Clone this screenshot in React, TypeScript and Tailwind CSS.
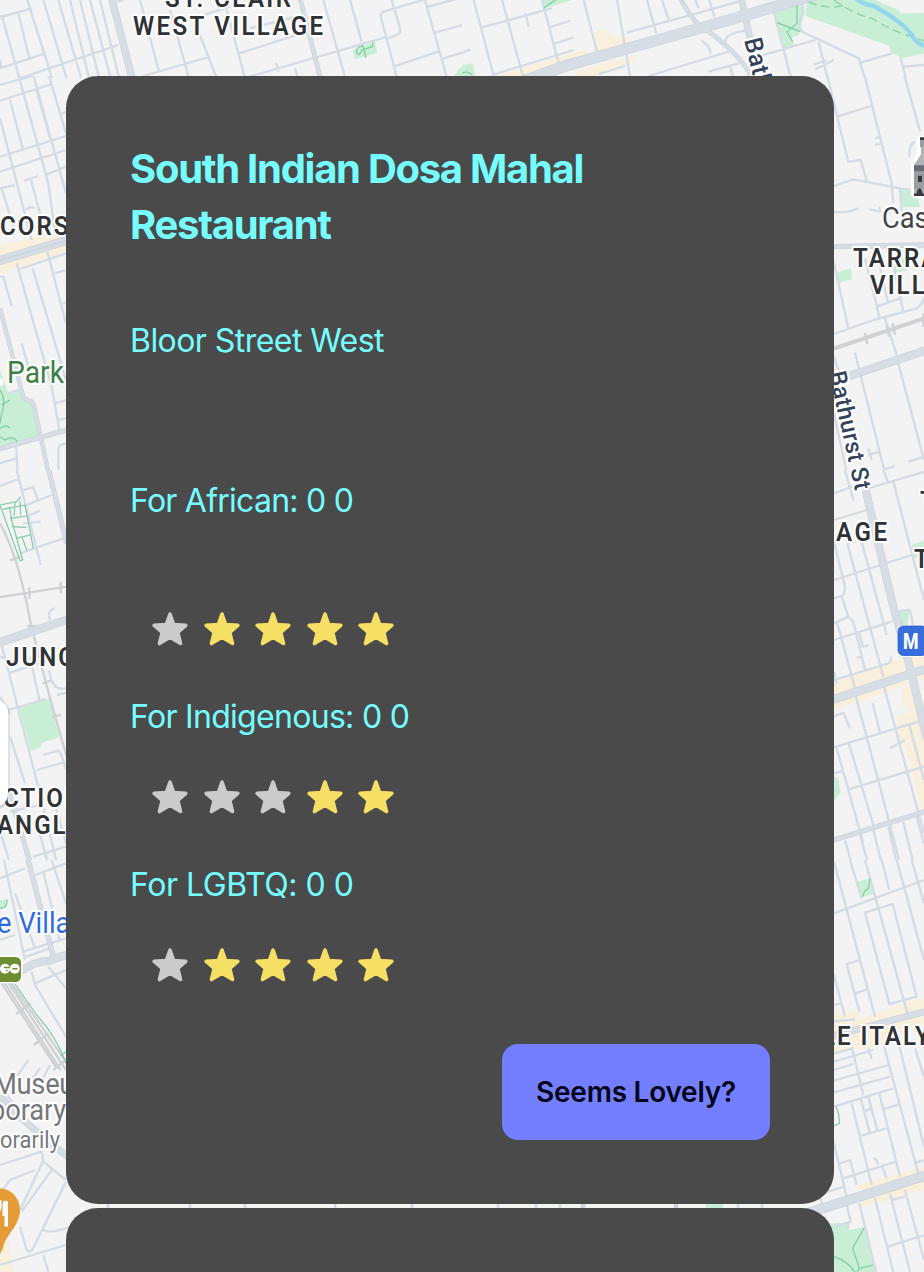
import React from "react";

type RegionProps = {
  x: number;
  y: number;
  w: number;
  h: number;
  box: string;
  parks?: string;
  commercial?: string;
  minor: string;
  major?: { d: string; w: number }[];
  rail?: string;
  trails?: string;
  children?: React.ReactNode;
};

function Region({ x, y, w, h, box, parks, commercial, minor, major = [], rail, trails, children }: RegionProps) {
  return (
    <svg x={x} y={y} width={w} height={h} viewBox={box} fill="none" strokeLinejoin="round">
      {commercial && <path d={commercial} fill="#f8f0dc" />}
      {parks && <path d={parks} fill="#c8efd5" />}
      <path d={minor} stroke="#d3dbe4" strokeWidth={7} />
      {rail && <path d={rail} stroke="#d0d1d3" strokeWidth={7} />}
      {major.map((m) => (
        <path key={m.d} d={m.d} stroke="#c5ced6" strokeWidth={m.w + 2} />
      ))}
      {major.map((m) => (
        <path key={m.d} d={m.d} stroke="#d7dde5" strokeWidth={m.w - 1} />
      ))}
      {trails && <path d={trails} stroke="#7fc9a4" strokeWidth={3.5} />}
      {children}
    </svg>
  );
}

type LabelProps = {
  x: number;
  y: number;
  text: string;
  size?: number;
  length?: number;
  color?: string;
  weight?: number;
  spacing?: number;
  rotate?: number;
  squeeze?: number;
};

function Label({
  x,
  y,
  text,
  size = 26.5,
  length,
  color = "#303236",
  weight = 600,
  spacing = 2.2,
  rotate = 0,
  squeeze = 0.91,
}: LabelProps) {
  return (
    <text
      fontSize={size}
      fontWeight={weight}
      fill={color}
      stroke="#ffffff"
      strokeWidth={4}
      strokeLinejoin="round"
      paintOrder="stroke"
      letterSpacing={spacing}
      textLength={length ? length / squeeze : undefined}
      transform={`translate(${x} ${y}) rotate(${rotate}) scale(${squeeze} 1)`}
    >
      {text}
    </text>
  );
}

function CityMap() {
  return (
    <svg
      className="absolute inset-0 font-['Roboto',sans-serif]"
      width="924"
      height="1272"
      viewBox="0 0 924 1272"
      aria-hidden="true"
    >
      <rect width="924" height="1272" fill="#f4f3f4" />
      <Region
        x={0} y={0} w={462} h={78} box="0 0 1386 234"
        parks="M1058 150L1125 125L1132 158L1065 178ZM1375 207L1386 200V234H1360Z"
        minor="M5 45L68 270M55 40L88 175M82 0L150 215L165 270M130 0L210 270M175 0L245 240M210 0L267 234M240 0L297 234M270 0L332 234M300 0L357 234M0 52L95 25M0 205L130 162M0 255L355 135M70 270L150 250M350 5L370 0M0 180L5 205M420 0L477 215M510 30L567 234M590 80L650 234M680 30L735 234M430 228L630 170M718 160L905 100M610 45L690 20M750 85L910 45M735 234L1155 112M828 188L836 215M885 205L894 234M970 0L1036 234M1050 0L1085 125M1270 0L1150 35Q1138 42 1145 60L1191 234M1175 0L1200 85Q1205 100 1190 105L1160 117M1275 0L1341 234M1285 20L1386 -8M1305 98L1386 75M1180 200L1315 155M1330 175L1386 158"
        major={[{ d: "M335 -5L396 234", w: 20 }, { d: "M900 -5L961 234", w: 12 }]}
        trails="M1090 138Q1065 140 1070 160Q1078 170 1085 150L1118 140V127M1088 135L1098 174"
      />
      <Region
        x={462} y={0} w={462} h={78} box="0 0 1386 234"
        commercial="M395 95Q430 80 460 110L495 105L500 130L405 155ZM80 234L375 147V170L220 234ZM340 215L520 165V185L370 234H340Z"
        parks="M240 0H330L247 25ZM0 195L32 190L40 234H0ZM935 40L1020 10L1025 45L1010 105L990 112L997 140L968 148ZM1035 0H1240L1310 30L1315 40L1386 38V160L1320 175L1285 155L1283 138L1030 48Z"
        minor="M35 0L95 228M120 0L182 225M240 0L290 190M365 0L405 155M465 0L505 234M555 0L583 100M600 0L620 58M700 0L710 25M742 0L757 50M60 82L270 25M190 40L200 80M262 82L325 62M275 132L335 112M90 225L335 150M495 98L830 5M410 222L490 198M560 228L800 155M740 215L830 190M885 170L1060 120M805 200L812 228M0 158L25 148M718 122Q748 140 745 162M850 92Q790 100 790 125M1020 0L1025 35Q1005 75 1020 95L1190 175L1220 270M1070 125L1105 270M935 35L987 234M1195 188L1290 160M1315 170L1340 270M1325 200L1386 195M1055 193L1095 180M1060 208L1115 180"
        major={[
          { d: "M655 -5Q700 80 740 95Q830 160 872 234", w: 12 },
          { d: "M838 -5L882 200", w: 18 },
          { d: "M180 245L310 198L560 128L860 43L1070 -18", w: 32 },
        ]}
        trails="M245 25L280 0M1005 15V70L975 95L992 125M945 68L1015 95M0 220Q18 210 30 225"
      >
        <path d="M1040 5Q1080 28 1150 17M1115 0Q1180 45 1230 55Q1290 95 1386 122" stroke="#8fcfaa" strokeWidth={4} strokeDasharray="26 14" />
        <path d="M1180 -5Q1205 14 1235 18Q1330 70 1352 110Q1365 132 1390 138" stroke="#93d7ec" strokeWidth={13} />
      </Region>

      <Region
        x={0} y={76} w={100} h={394} box="0 48 300 1182"
        commercial="M0 555L240 500V560L0 642Z"
        parks="M0 930L25 1000L58 990L70 1020L100 1030L120 1125L0 1160Z"
        minor="M0 175L95 540M30 120L68 265M40 -10L145 370L165 520M110 90L150 235M85 -10L198 400M130 -10L198 220M0 75L240 8M0 122L155 72M0 290L198 228M0 335L198 270M0 385L45 375M72 362L115 348M135 345L198 320M180 162L240 143M78 450Q90 435 105 445M5 385L40 500M93 360L125 480M178 330L198 400M50 610L155 980L178 1110M98 625L198 960M142 575L198 790M0 650H10L35 738M65 850L85 920M60 627L198 580M165 640L198 630M188 730L198 727M165 1030L198 1020M175 1080L198 1075M25 1000L55 990M175 1260V1165Q175 1155 198 1150M48 1155L55 1260M0 1210L50 1195"
        major={[
          { d: "M0 745L67 1000Q72 1022 90 1022Q102 1025 105 1050L150 1260", w: 11 },
          { d: "M-5 1167L200 1110", w: 13 },
          { d: "M-5 603L250 526", w: 25 },
        ]}
        trails="M0 990Q20 1020 5 1060L0 1090M5 1035L30 1020M0 1105Q20 1090 30 1105M0 1130L15 1140Q40 1125 52 1145"
      >
        <path d="M-5 603L200 541" stroke="#c5ced6" strokeWidth={3} />
        <circle cx="-2" cy="967" r="12" fill="#fff" />
      </Region>

      <Region
        x={0} y={470} w={80} h={390} box="0 0 240 1170"
        parks="M58 715L148 685L178 802L122 820L125 830L92 842Z"
        minor="M50 0L122 285M0 48L60 25M80 105L155 75M70 60L100 52Q108 75 115 92M85 138L120 122M70 160L122 155M60 250L190 205M150 450Q140 420 165 415M5 525L130 1010L175 1200M0 560L15 565M30 608L150 570M90 560L118 690M25 720L135 688M148 600Q155 665 198 655M170 675L198 668M110 900L190 878M130 855L175 842Q185 850 198 900M30 800L75 940M0 1080L35 1200M30 1025L120 1005M165 1005L198 1120M110 1060L150 1200M0 680L30 730M100 1160L198 1130"
        rail="M0 160Q55 260 90 450Q130 620 200 860M-5 382L200 350M88 352V387M182 335V370M30 272L60 260M82 468H110M128 640L153 632M155 742L183 734"
        major={[
          { d: "M145 -5L200 220", w: 13 },
          { d: "M-5 518L200 450", w: 24 },
          { d: "M25 960L97 1200", w: 13 },
        ]}
        trails="M0 105L50 95L62 80M0 105L60 272L68 270L35 150L28 110M8 118L75 105L100 235M30 145L80 138M35 170L80 172M48 205L90 195M45 98L42 138M60 92L62 135M66 200L80 240"
      />
      <Region
        x={0} y={860} w={100} h={412} box="0 0 300 1236"
        commercial="M0 1130L25 1140L45 1236H0Z"
        parks="M0 120L22 118L20 138L0 148Z"
        minor="M12 0L75 300M0 55L75 25M130 35L180 245M155 0L198 130M105 45L198 10M45 100L105 265M0 240L45 225M70 275L198 235M78 290L150 265M95 335L105 375L198 530M105 370L198 330M145 320L198 385M0 915L125 875L130 905L198 960M128 905L60 1050M155 930L65 1055M105 930L30 960L0 1000M60 1100L80 1170Q88 1180 98 1168L198 965M130 1110Q150 1125 240 1090M0 1215L280 1130M85 600L50 650M120 625L80 680M150 615L110 690M0 680L40 730M198 940L300 1000M130 1185L145 1236"
        rail="M5 370L170 625M15 370L182 630M27 370L198 630M35 370L205 615M48 462L92 430M102 555L145 520M160 630L198 600"
        major={[
          { d: "M83 -5L160 290", w: 14 },
          { d: "M60 335Q110 300 150 302Q170 292 200 285", w: 22 },
          { d: "M0 708Q60 780 210 895", w: 18 },
        ]}
        trails="M45 372L110 465Q170 530 198 610M182 588L198 575M0 145Q25 145 20 118"
      />

      <Region
        x={802} y={76} w={122} h={394} box="-54 48 366 1182"
        parks="M238 390L290 395L300 440L250 442ZM48 638L92 625L97 658L55 668ZM222 600L255 595L262 632L225 638Z"
        minor="M10 0L85 305L122 300L140 362M122 0L215 370L220 430M240 0L300 215M50 170L155 138M245 20L312 15M165 235L180 231M165 255L183 251M42 378L100 358L240 385L312 395M40 455Q70 462 115 445M148 448L180 455L178 440M42 610L85 805M135 595L178 770M175 595L203 725M215 595L250 755M170 740L240 715M42 822L160 780L290 745Q305 735 312 715M240 385L245 455M195 775L230 885M235 910L312 1200M105 878L200 1260M42 890L55 930M42 1060L85 1260M145 1185L178 1175M145 1165L155 1200M195 1228L225 1218M265 1205L312 1190M240 1260L312 1235M285 245Q265 255 268 290"
        rail="M42 868L312 778M42 863L312 773M135 818L142 852M200 795L207 830M218 790L225 824M310 760V800"
        major={[{ d: "M40 560L314 555", w: 14 }, { d: "M75 952L314 872", w: 23 }]}
      >
        <path d="M286 402V316L303 285V240H330V402Z" stroke="#fff" strokeWidth="26" fill="#fff" />
        <path d="M282 315L303 283V235H312V408H282Z" fill="#b0b2b8" />
        <path d="M300 235H312V262H300ZM282 334H312V388H282Z" fill="#9b9da5" />
        <path d="M282 316H312V334H282ZM282 400H312V408H282Z" fill="#686b73" />
        <path d="M294 347H306V366H294ZM290 408V396Q299 373 307 396V408ZM300 232H312V240H300ZM282 402H312V408H282Z" fill="#37393f" />
      </Region>
      <Region
        x={820} y={470} w={104} h={390} box="0 0 312 1170"
        commercial="M42 635L230 570L312 550V625L42 722ZM250 655L300 640L312 700V1020L300 1010L270 870L235 790L230 740L272 725L245 690Z"
        parks="M42 920L55 925L62 970L42 992ZM238 425L268 422L262 470H245ZM275 225L312 210V240L285 265Z"
        minor="M42 70L110 45M130 60L312 5M42 150L140 120M42 330L275 255M42 510L215 455M75 0L100 90M190 0L205 40M220 35L312 390M82 220L190 620M125 215L200 495M42 215L75 350Q75 375 65 378L42 385M65 378L85 440L100 455L135 600M42 460L85 440M52 460L105 655M42 630L205 580Q215 575 213 560M42 605L50 640M118 490L128 530L145 527M110 562H125M105 670L185 970L245 1200M192 650L312 1090M42 740L70 728L90 775M158 698L180 790M42 832L295 755M50 835L130 1120M85 815L160 1065M210 835L255 810M85 958L312 890M268 765L312 930M42 910L68 902M75 1110L100 1200M120 1095L150 1200M160 1080L190 1200M205 1070L235 1200M250 1055L285 1200M290 1040L312 1120M230 440Q230 418 270 420L280 470"
        major={[
          { d: "M42 1110L314 1025", w: 13 },
          { d: "M137 60L215 390L272 600L320 805", w: 22 },
          { d: "M40 688L314 598", w: 24 },
        ]}
      />
      <Region
        x={802} y={860} w={122} h={412} box="-54 0 366 1236"
        commercial="M42 465L110 450L122 475L312 412V492L170 560L42 578ZM115 975L312 920V990L125 1040Z"
        parks="M112 65L150 55L160 102L125 112ZM-54 1095L80 1088L88 1110L132 1100L165 1236H-54Z"
        minor="M42 5L165 470M90 0L125 115M135 0L265 470M185 0L208 90M230 0L312 300M275 0L312 130M42 160L312 60M135 158L218 132L290 410L208 432ZM42 345L75 470M118 300L80 312L118 455M105 400L145 387M42 435L60 430M42 484L105 478M42 580L100 565M42 605L160 570M42 630L100 612M42 662L205 615M42 697L210 650M42 740L220 685M95 560L130 705M145 565L155 597M190 550L300 960M235 545L312 860M285 565L312 650M95 730L155 975M122 715L150 820M145 710L172 812M132 755L155 745M178 700L240 950M120 828L200 805M190 748L235 733M60 910L90 900L110 975M160 895Q172 895 173 915M70 955L228 905M187 920L200 955M285 908L312 900M42 850L80 1010M0 1003L70 980M0 1010L8 1035M80 1035L92 1085L42 1100M85 1085V1105M118 1030L168 1236M165 1015L220 1236M210 1000L270 1236M255 990L312 1200M215 1020L255 1010M205 1160L312 1125"
        major={[{ d: "M40 527L314 455", w: 18 }, { d: "M-54 1065L314 947", w: 28 }]}
        trails="M130 110Q128 95 145 85L150 55M48 740Q60 765 58 790L42 798M132 1105L98 1165L118 1225L160 1215M42 1190Q85 1205 105 1236M118 1225L112 1236"
      />

      <g>
        <rect x="96" y="1202" width="708" height="8" fill="#f4f6f2" />
        <path d="M706 1202H723V1210H706Z" fill="#c8efd5" />
        <path d="M108 1202V1210M190 1202V1210M245 1202V1210M335 1202V1210M412 1202V1210M498 1202V1210M536 1202V1210M560 1202V1210M738 1202V1210M762 1202V1210" stroke="#d3dbe4" strokeWidth="2.5" />
        <path d="M583 1202V1210M676 1202V1210" stroke="#cbd3dc" strokeWidth="4.5" />
      </g>

      <Label x={165} y={7} text="ST. CLAIR" length={128} />
      <Label x={133} y={34.5} text="WEST VILLAGE" length={192} />
      <Label x={0} y={235} text="CORSO" />
      <Label x={7} y={383} text="Park" size={31} weight={400} color="#3d8045" spacing={0} length={57} />
      <Label x={6} y={666} text="JUNCTION" />
      <Label x={3} y={807} text="CTION" />
      <Label x={-3} y={834} text="ANGLE" />
      <Label x={-3} y={933} text="e Village" size={30} weight={400} color="#2f6be0" spacing={0} />
      <Label x={-7} y={1094} text="Museum" size={30} weight={400} color="#74787d" spacing={-0.3} />
      <Label x={-10} y={1120} text="porary" size={30} weight={400} color="#74787d" spacing={-0.3} length={76} />
      <Label x={0} y={1148} text="orarily" size={24} weight={400} color="#74787d" spacing={0} length={60} />
      <Label x={882} y={228} text="Casa" size={30} weight={400} color="#424548" spacing={0} />
      <Label x={853} y={267} text="TARRAGON" />
      <Label x={870} y={294} text="VILLAGE" />
      <Label x={836} y={541} text="AGE" length={53} />
      <Label x={920} y={510} text="T" />
      <Label x={914} y={568} text="THE" />
      <Label x={822} y={1045} text="LE ITALY" />
      <Label x={744} y={40} text="Bathurst" size={25} weight={500} color="#35425a" spacing={0.4} rotate={76} squeeze={0.97} />
      <Label x={829} y={373} text="Bathurst St" size={24} weight={500} color="#35425a" spacing={0} length={121} rotate={77.5} squeeze={0.97} />

      <g>
        <rect x="-30" y="702" width="38" height="108" rx="13" fill="#8a8d92" opacity="0.18" />
        <rect x="-30" y="700" width="40" height="108" rx="13" fill="#8a8d92" opacity="0.18" />
        <rect x="-30" y="700" width="38" height="106" rx="12" fill="#ffffff" />
      </g>
      <g>
        <rect x="-8" y="955.5" width="30.5" height="27.5" rx="7" fill="#ffffff" />
        <rect x="-8" y="957" width="29" height="25" rx="5.5" fill="#6c8d30" />
        <circle cx="5" cy="968.8" r="5" fill="#fff" />
        <circle cx="14.8" cy="968.8" r="5" fill="#fff" />
        <path d="M4 967.5H10M12.300 968.800H17.500M6 970.5H7.500" stroke="#6c8d30" strokeWidth="1.500" />
      </g>
      <g>
        <path d="M0 1188.500C11 1188.500 20 1198 20 1210C20 1226 5 1235 3 1248L-1 1256Z" fill="#e59b36" />
        <path d="M3.500 1201Q8 1200 8 1202V1226.500H4.500V1216H2.500V1204ZM-3 1200H-1V1206H0V1200H1.500V1208Q1 1211 -1 1212Z" fill="#fff" />
      </g>
      <g>
        <rect x="897" y="625" width="31" height="32" rx="6" fill="#ffffff" opacity="0.7" />
        <rect x="898" y="626" width="29" height="29.500" rx="5.500" fill="#386ddd" stroke="#285bc4" strokeWidth="0.8" />
        <text x="903" y="648.5" fontSize="21.500" fontWeight="800" fill="#fff" textLength="15.500" lengthAdjust="spacingAndGlyphs">
          M
        </text>
      </g>
    </svg>
  );
}

function Star({ muted }: { muted: boolean }) {
  return (
    <svg width="36" height="34" viewBox="0 0 36 34" className={muted ? "text-[#cbcbcb]" : "text-[#f5df64]"}>
      <path
        d="M18 2L21.700 12.500L33.800 13.400L25.700 20.300L28.500 31.500L18 25.300L7.500 31.500L10.300 20.300L2.200 13.400L14.300 12.500Z"
        fill="currentColor"
        stroke="currentColor"
        strokeWidth="3.600"
        strokeLinejoin="round"
      />
    </svg>
  );
}

function Rating({ muted }: { muted: number }) {
  return (
    <div className="flex h-12 items-center gap-[15.5px] pl-[22px]">
      {[0, 1, 2, 3, 4].map((i) => (
        <Star key={i} muted={i < muted} />
      ))}
    </div>
  );
}

export default function App() {
  return (
    <main className="relative h-[1272px] w-[924px] overflow-hidden font-['Inter',sans-serif]">
      <CityMap />
      <div className="relative ml-[66px] flex w-[768px] flex-col gap-1 pt-[76px]">
        <article className="flex h-[1128px] flex-col rounded-[32px] bg-[#4a4a4a] px-16 pt-[65px] pb-16 text-[32px] leading-[48px] text-[#75fdff]">
          <h2 className="text-[40px] leading-[56px] font-bold tracking-[-1.28px]">
            South Indian Dosa Mahal
            <br />
            Restaurant
          </h2>
          <p className="mt-16 tracking-[-0.55px]">Bloor Street West</p>
          <p className="mt-28 tracking-[-0.75px]">For African: 0 0</p>
          <div className="mt-20">
            <Rating muted={1} />
          </div>
          <p className="mt-10 tracking-[-0.7px]">For Indigenous: 0 0</p>
          <div className="mt-8">
            <Rating muted={3} />
          </div>
          <p className="mt-10 tracking-[-0.45px]">For LGBTQ: 0 0</p>
          <div className="mt-8">
            <Rating muted={1} />
          </div>
          <button className="mt-auto h-24 w-[268px] self-end rounded-2xl bg-[#747fff] text-[28px] font-semibold tracking-[-0.25px] text-[#020417]">
            Seems Lovely?
          </button>
        </article>
        <article className="h-[300px] rounded-[32px] bg-[#4a4a4a]" />
      </div>
    </main>
  );
}
